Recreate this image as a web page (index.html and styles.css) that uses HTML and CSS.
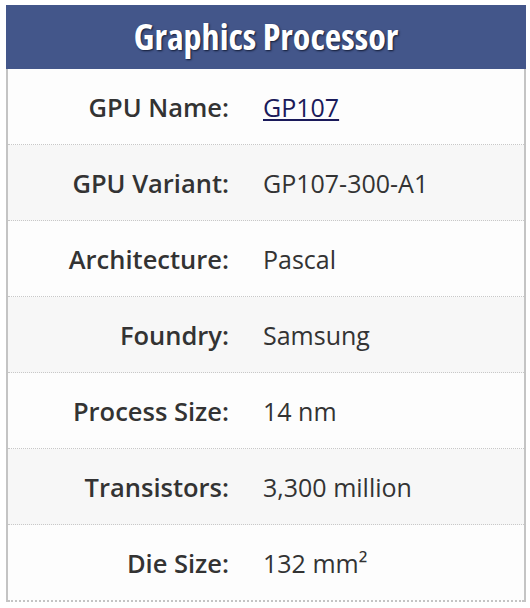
FILE: index.html
```html
<!DOCTYPE html>
<html>
<head>
<meta charset="utf-8">
<link rel="stylesheet" href="styles.css">
</head>
<body>
<section class="panel">
  <h2 class="panel-title">Graphics Processor</h2>
  <dl class="specs">
    <div class="row"><dt>GPU Name:</dt><dd><a href="#">GP107</a></dd></div>
    <div class="row"><dt>GPU Variant:</dt><dd>GP107-300-A1</dd></div>
    <div class="row"><dt>Architecture:</dt><dd>Pascal</dd></div>
    <div class="row"><dt>Foundry:</dt><dd>Samsung</dd></div>
    <div class="row"><dt>Process Size:</dt><dd>14 nm</dd></div>
    <div class="row"><dt>Transistors:</dt><dd>3,300 million</dd></div>
    <div class="row"><dt>Die Size:</dt><dd>132 mm²</dd></div>
  </dl>
</section>
</body>
</html>
```

FILE: styles.css
```css
html, body {
  margin: 0;
  padding: 0;
  background: #ffffff;
}

.panel {
  width: 520px;
  margin: 5px 0 0 6px;
  font-family: "Open Sans", "Liberation Sans", sans-serif;
}

.panel-title {
  margin: 0;
  height: 64px;
  background: #43568a;
  color: #ffffff;
  font-family: "Open Sans", sans-serif;
  font-stretch: 75%;
  font-weight: 700;
  font-size: 36px;
  line-height: 64px;
  text-align: center;
  text-shadow: 1px 1px 2px #111a33;
}

.specs {
  margin: 0;
  border-left: 2px solid #c4c4c4;
  border-right: 2px solid #c4c4c4;
}

.row {
  display: grid;
  grid-template-columns: 221px 1fr;
  column-gap: 34px;
  align-items: center;
  height: 75px;
  border-bottom: 1px dotted #c8c8c8;
  background: #fdfdfd;
}

.row:nth-child(even) {
  background: #f7f7f7;
}

.row:last-child {
  border-bottom: 2px dotted #c4c4c4;
}

.row dt {
  text-align: right;
  font-weight: 600;
  font-size: 25.5px;
  color: #333333;
}

.row dd {
  margin: 0;
  font-size: 25px;
  color: #333333;
}

.row dd a {
  color: #1a1a5a;
  text-decoration: underline;
}
```
